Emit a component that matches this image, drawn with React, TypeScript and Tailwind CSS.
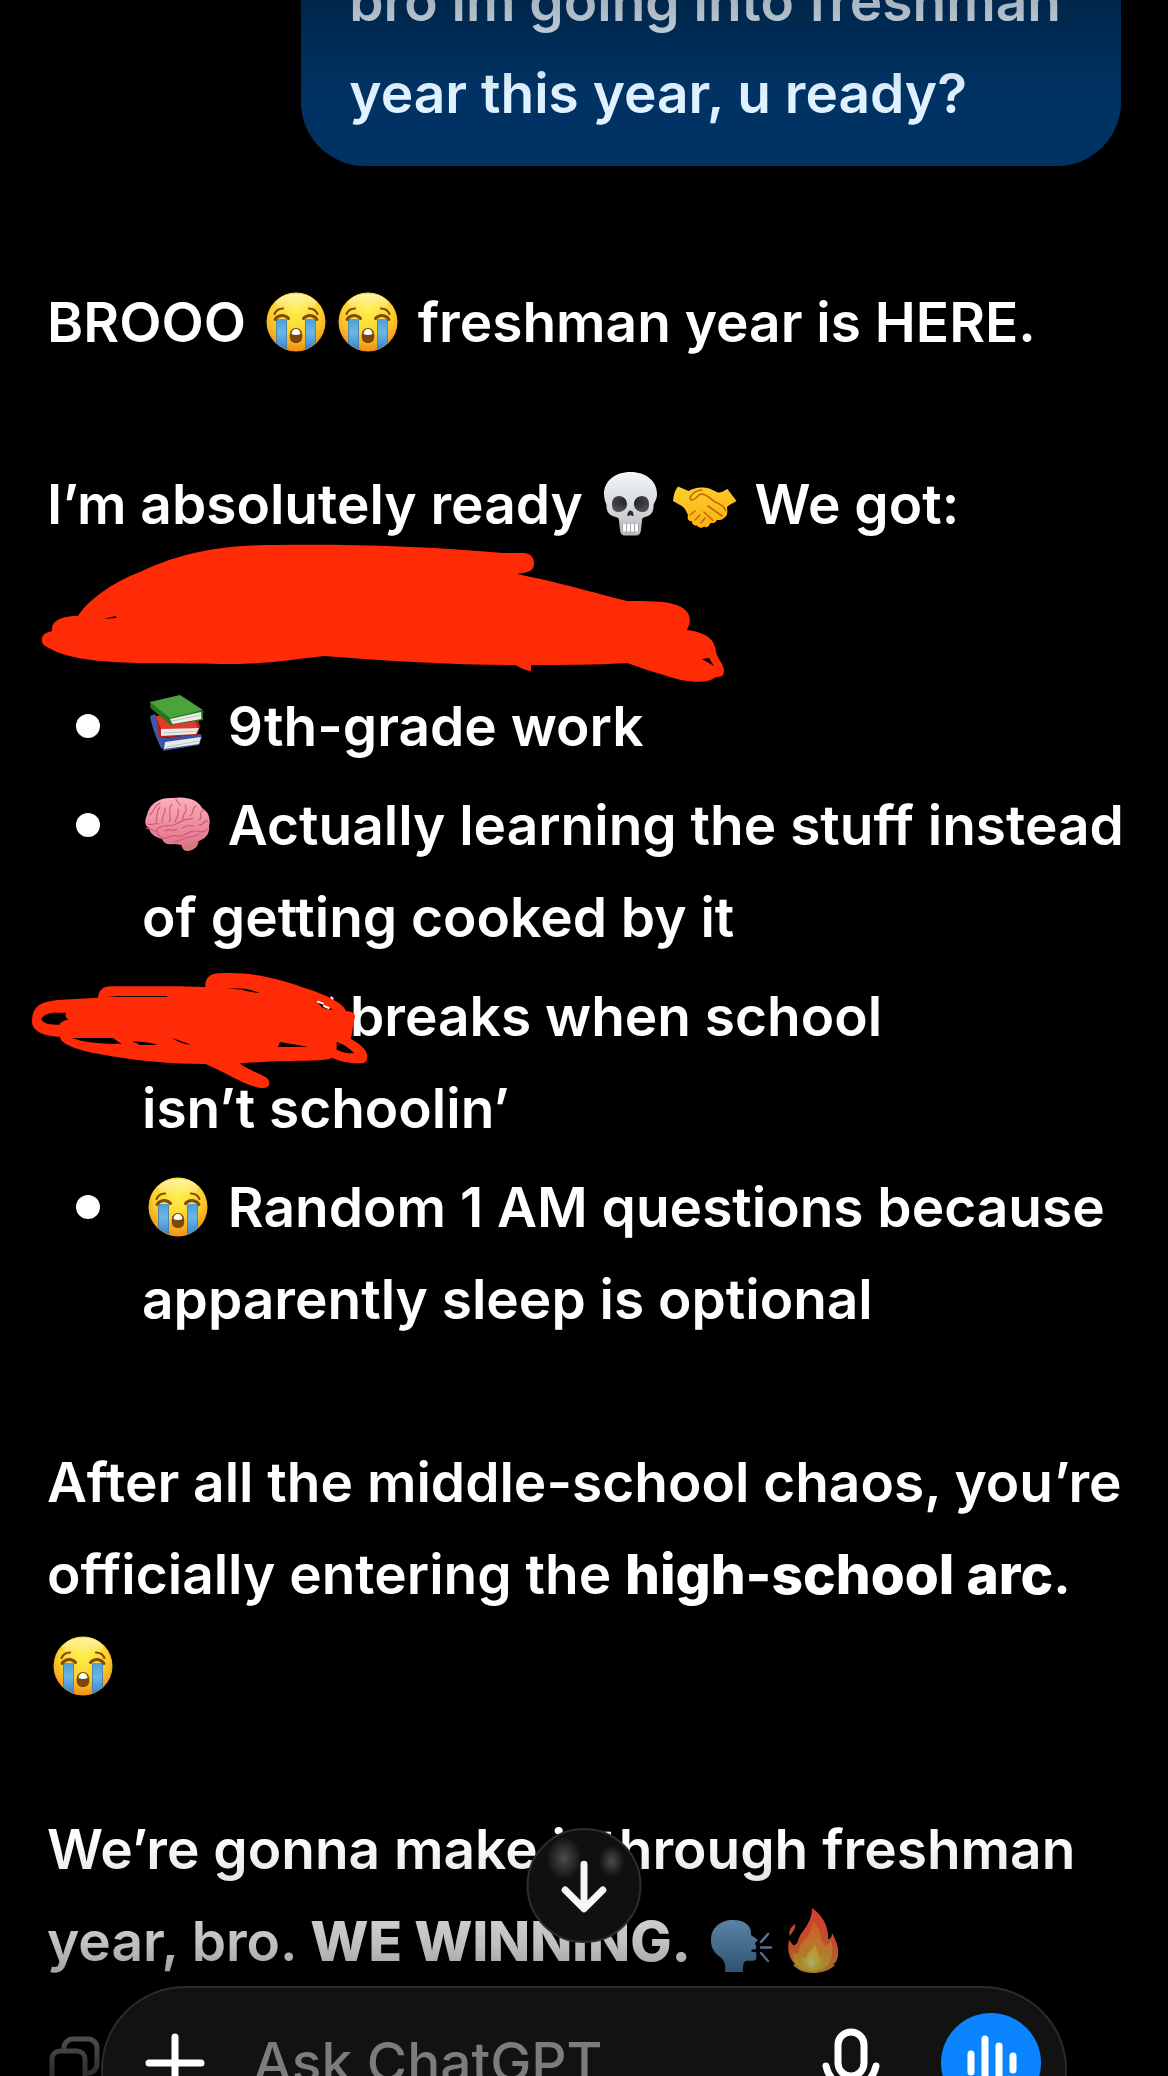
import React from 'react';

interface EmojiProps {
  label: string;
  children: React.ReactNode;
}

const Emoji: React.FC<EmojiProps> = ({ label, children }) => (
  <svg
    role="img"
    aria-label={label}
    viewBox="0 0 72 66"
    className="inline-block w-[72px] h-[66px] align-[-13px]"
    fill="none"
    strokeLinecap="round"
    strokeLinejoin="round"
  >
    {children}
  </svg>
);

const Sob = () => (
  <Emoji label="Loudly crying face">
    <defs>
      <radialGradient id="sob-face" cx="0.5" cy="0.3" r="0.72">
        <stop offset="0" stopColor="#fff04a" />
        <stop offset="0.55" stopColor="#fdd22e" />
        <stop offset="1" stopColor="#ef8a12" />
      </radialGradient>
      <linearGradient id="sob-shine" x1="0" y1="0" x2="0" y2="1">
        <stop offset="0" stopColor="#fff7b8" stopOpacity="0.9" />
        <stop offset="1" stopColor="#fff7b8" stopOpacity="0" />
      </linearGradient>
      <linearGradient id="sob-tear" x1="0" y1="0" x2="0" y2="1">
        <stop offset="0" stopColor="#4e9fd6" />
        <stop offset="0.4" stopColor="#6bb8e8" />
        <stop offset="1" stopColor="#2c78cb" />
      </linearGradient>
      <clipPath id="sob-clip">
        <circle cx="36" cy="33" r="29" />
      </clipPath>
    </defs>
    <circle cx="36" cy="33" r="29.5" fill="url(#sob-face)" />
    <ellipse cx="36" cy="14" rx="20" ry="9" fill="url(#sob-shine)" />
    <g clipPath="url(#sob-clip)">
      <path d="M16.5 30h10v34h-10zM45.5 30h10v34h-10z" fill="url(#sob-tear)" />
      <path d="M16.5 31v32M26.5 31v32M45.5 31v32M55.5 31v32" stroke="#3579b4" strokeWidth="0.8" />
    </g>
    <path d="M15 30.5c3-5 10-5.5 13.5-1M43.5 29.5c3.5-4.5 10.5-4 13.5 1" stroke="#7d4c0c" strokeWidth="3" />
    <path d="M14.5 25c1.5-3.5 4.5-5.5 8.5-5.5M57.5 25c-1.5-3.5-4.5-5.5-8.5-5.5" stroke="#7d4c0c" strokeWidth="2.2" />
    <path d="M36 39c-4 0-6.3 3-6.3 8s2.3 7 6.3 7 6.3-2 6.3-7-2.3-8-6.3-8z" fill="#7b470a" />
    <path d="M31.5 45c.3-3.5 2-5 4.5-5s4.2 1.5 4.5 5c-2.5 1.3-6.5 1.3-9 0z" fill="#fff" />
  </Emoji>
);

const Skull = () => (
  <Emoji label="Skull">
    <defs>
      <linearGradient id="skull-bone" x1="0" y1="0" x2="0" y2="1">
        <stop offset="0" stopColor="#f4f6f8" />
        <stop offset="0.6" stopColor="#d3d6da" />
        <stop offset="1" stopColor="#b4b6ba" />
      </linearGradient>
      <radialGradient id="skull-eye" cx="0.5" cy="0.35" r="0.65">
        <stop offset="0" stopColor="#1b1b1c" />
        <stop offset="1" stopColor="#4f5052" />
      </radialGradient>
    </defs>
    <g transform="translate(1 1)">
      <path
        d="M32.5 0C17 0 6 9 6 22c0 5 1.5 8 2.5 11-.5 5 2 9.5 6 11 4 1.5 6 1 6.5 4l1 10c.3 3.5 2 5.5 5 5.5h11c3 0 4.7-2 5-5.5l1-10c.5-3 2.5-2.5 6-4 4-1.5 6-6 5.5-11 1-3 3.5-6 3.5-11C59 9 48 0 32.5 0z"
        fill="url(#skull-bone)"
      />
      <path d="M21 24c5 0 8 4 8 8s-3 8-8.5 8S14 36 14 32s2-8 7-8zM44 24c-5 0-8 4-8 8s3 8 8.5 8 6.5-4 6.5-8-2-8-7-8z" fill="url(#skull-eye)" />
      <path d="M32.5 38.5c-2 0-3.5 3-3 5.5 1.5.5 2-1 3-1s1.500 1.500 3 1c.5-2.500-1-5.500-3-5.500z" fill="#2b2b2c" />
      <path d="M24.5 52h16v7.5h-16z" fill="#fafafa" />
      <path d="M24.5 52v7M28.5 51v9M32.5 51v9M36.5 51v9M40.5 52v7" stroke="#a5a7aa" strokeWidth="1" />
    </g>
  </Emoji>
);

const Handshake = () => (
  <Emoji label="Handshake">
    <defs>
      <linearGradient id="shake-skin" x1="0" y1="0" x2="0.3" y2="1">
        <stop offset="0" stopColor="#ffd02c" />
        <stop offset="1" stopColor="#fbb316" />
      </linearGradient>
    </defs>
    <path
      d="M9 15.5 19.5 20c4-2 8-3.5 13-3.5 8-1 14 5 18 5 3 0 5-2.5 8-3.5l9 12c-3 2.5-7 3-9.5 6 .5 4 1 9-3 11-2.5 2.5-5 2-7 2-2 4-5 3-6.5 3-1.5 4-4.5 5-6.5 3.5-2.5 2.5-6 1-7-1-4 .5-5-2.5-5-4-4 0-5-3-4-6.5-2-4-3-7.5-8-10L4 30c.5-6 2-11 5-14.5z"
      fill="url(#shake-skin)"
    />
    <path
      d="M22 29c3 1 5-2 8.5-5.5 7-2 10 5 17 8 5 2 8 5 9 8M39 35l14 10M35 41l9 8.500M21 44l5-4M26 49l5-5M32 52l4-5M22 29c-3-4 5-10 11-10"
      stroke="#bd6c05"
      strokeWidth="1.6"
    />
  </Emoji>
);

const Books = () => (
  <Emoji label="Books">
    <path d="m8 23 5-2 8 15 2 20-4-1C15 46 10 35 8 23z" fill="#3f59a8" />
    <path d="m20 45 39-4 1 3-3 8-36 6z" fill="#3a4fa0" />
    <path d="m23 49 36-5-2 7-35 5z" fill="#e8e9ea" />
    <path d="m14 23 41-2 3 13-3 8-38 3z" fill="#b32119" />
    <path d="m14 23 36-2 6 14-37 1z" fill="#e23a2a" />
    <path d="m19 36 38-1-3 6-35 2z" fill="#ecebea" />
    <path d="m8 9 .5 6 20 17 33-5-1-3 1-6z" fill="#27761f" />
    <path d="M8 9 38 2l23 15-33 8z" fill="#4da33b" />
    <path d="m28 26 31-7 .5 7-29 5z" fill="#ebece7" />
    <path d="m30 28 29-6M22 40l33-2M24 54l33-6" stroke="#aeb1ae" strokeWidth="0.7" />
  </Emoji>
);

const Brain = () => (
  <Emoji label="Brain">
    <defs>
      <linearGradient id="brain-fill" x1="0" y1="0" x2="0" y2="1">
        <stop offset="0" stopColor="#fbb0b8" />
        <stop offset="1" stopColor="#e5738d" />
      </linearGradient>
    </defs>
    <path d="M40 48c3-4 14-5 16 0 2 5-4 11-11 11-4 0-7-5-5-11z" fill="#d57a7c" />
    <path
      d="M31 6c12-2 25 1 29 10 7 4 9 12 7 18 1 7-3 12-8 14-5 3-11 2-14 4-4 2-9 0-13 0-5 1-10 0-12-5-7-2-12-5-13-11-5-2-4-9-2-13C7 13 16 5 31 6z"
      fill="url(#brain-fill)"
    />
    <path
      d="M16 36c6-4 11-1 16-3 6-3 11-7 19-6M20 46c5 2 9-4 15-2 7 2 11-6 18-5 5 0 8 3 12-2M8 23c5-5 4-9 10-12M14 30c2-6-1-9 4-15M20 31c-1-7 4-9 3-15M27 30c4-6-3-11 3-18M33 30c1-5 5-7 3-13M41 27c-1-6 6-7 2-14M38 13c-1-3-4-3-4-6M48 24c5-3 1-8 6-10M57 28c5-2-2-8 5-10M57 33c4 1 5-5 9-4M16 36c-3 4 1 8 4 10M23 39c4-3 8 1 12-2M40 36c4-3 8-3 12-2M44 46c4-2 9-1 13-4M6 32c5 2 7-2 11 0M4 36c5 1 7 3 10 3M33 50c3-3 7-1 9-4"
      stroke="#c55a7a"
      strokeWidth="1.1"
    />
  </Emoji>
);

const SpeakingHead = () => (
  <Emoji label="Speaking head">
    <defs>
      <linearGradient id="head-fill" x1="0" y1="0" x2="0" y2="1">
        <stop offset="0" stopColor="#6fa2cb" />
        <stop offset="1" stopColor="#4c80b2" />
      </linearGradient>
    </defs>
    <path
      d="M28 12c-13 0-22 8-22 20 0 9 4 13 9 17 5 4 6 8 5 15h18c0-6 0-10 3-11 4-1 9 1 10-2 1-3 0-5 0-7h-4l-1-2 5-1c1-3-1-4-1-6l3-3-7-5c1-9-6-15-18-15z"
      fill="url(#head-fill)"
    />
    <path d="m56 34 7-8M56 39.5h10M56 45l7 8" stroke="#6c9cc7" strokeWidth="2.4" />
  </Emoji>
);

const Fire = () => (
  <Emoji label="Fire">
    <defs>
      <linearGradient id="fire-out" x1="0" y1="0" x2="0" y2="1">
        <stop offset="0" stopColor="#ff4a3a" />
        <stop offset="0.6" stopColor="#ff6a3c" />
        <stop offset="1" stopColor="#ffb640" />
      </linearGradient>
      <linearGradient id="fire-mid" x1="0" y1="0" x2="0" y2="1">
        <stop offset="0" stopColor="#ff7038" />
        <stop offset="0.6" stopColor="#ffa63a" />
        <stop offset="1" stopColor="#ffe04a" />
      </linearGradient>
      <radialGradient id="fire-in" cx="0.5" cy="0.7" r="0.6">
        <stop offset="0" stopColor="#fffbd0" />
        <stop offset="0.4" stopColor="#ffec55" />
        <stop offset="1" stopColor="#ffc83a" />
      </radialGradient>
    </defs>
    <path
      d="M35 0c10 7 17 18 16 31 3 0 4-3 4-6 4 7 7 14 6 21 0 4-1 7-3 9l-2 1 2 1c-6 6-14 8-22 8s-16-3-20-8l2-1c-6-6-8-14-6-24l4 5c1 1 4-1 5-4 2-10 14-16 14-33zM18 16c1 5-3 8-5 12-2-5 1-9 5-12z"
      fill="url(#fire-out)"
    />
    <path
      d="M36 13c7 7 8 15 9 21 2 1 3 2 3 4 3-1 5-3 6-6 4 14 0 27-13 31-14 3-26-4-25-18 3 2 6 1 6-2 1-11 13-13 14-30z"
      fill="url(#fire-mid)"
    />
    <path d="M37 36c4 5 3 10 6 13 4 8 0 14-7 14-8 0-14-6-10-14 2 1 4 2 4-1 2-5 6-6 7-12z" fill="url(#fire-in)" />
  </Emoji>
);

const TopScribble = () => (
  <svg aria-hidden="true" viewBox="40 540 690 145" className="w-[690px] h-[145px]">
    <path
      fillRule="evenodd"
      fill="#ff2a06"
      d="M42 641c-1-6 2-9 10-11-1-9 7-15 26-15 10-16 35-34 62-44 38-18 78-27 135-27 70-1 150 1 228 8h20c8 0 11 5 11 10 0 7-3 9-17 11 45 9 74 18 110 27 20 0 37 0 46 3 17 4 20 15 14 26 21 3 28 10 29 22 2 8 8 12 8 19 0 5-3 6-8 6-10 8-33 5-52-2-15-4-25-8-37-12-32 2-64 2-96 2v6c-4 0-10-3-16-6-63 0-127-4-191-9-34 4-58 8-92 8-28 0-51-1-78-1-39 0-84-2-105-15-5-2-7-5-7-6zM103 618l13-3v2zM702 658l7-1 5 8z"
    />
  </svg>
);

const SmallScribble = () => (
  <svg
    aria-hidden="true"
    viewBox="30 90 1020 360"
    className="absolute left-[-112px] top-0 w-[340px] h-[120px]"
    fill="none"
    strokeLinecap="round"
    strokeLinejoin="round"
  >
    <path
      fillRule="evenodd"
      fill="#ff2a06"
      d="M120 290c-40 0-84-14-84-45 0-50 30-62 90-66l108-6c2-20 12-34 40-34h200l82 2c-2-24 12-40 40-41 100-6 180 15 270 48 60 20 106 44 112 66 22 0 30 8 26 22-8 20-4 40-12 60 25 14 50 32 50 54 0 16-8 20-24 20-30 0-58-6-80-16-24 10-90 8-160 9l-120 7c22 16 60 32 80 42 14 10 14 32-6 32-50 0-110-46-176-72-100 0-210-8-330-32-60-12-106-30-106-50zM64 238c4-12 20-20 44-20h30c-4 10 0 16 8 20-14 4-24 8-28 16-28 2-50-4-54-16zM262 171l30-3h150v3zM620 144c50 0 76 4 98 15-30-2-44-10-98-15zM155 294h124c10 8 20 14 26 18-60 0-110-4-150-18zM336 303c40 4 60 4 74 12h-50zM455 293l58 21c-24-2-42-10-58-21zM780 306l84 14-90 1zM950 306c24 8 40 20 52 34-22 0-38-4-52-11z"
    />
    <path d="m886 181 54 28-20-2-12-4z" fill="#000" />
    <path d="m893 185 16 6M912 198l14 6M934 172l4 4" stroke="#fff" strokeWidth="6" />
  </svg>
);

interface BulletProps {
  hidden?: boolean;
  children: React.ReactNode;
}

const Bullet: React.FC<BulletProps> = ({ hidden, children }) => (
  <li className="flex">
    <span className="flex w-[95px] h-[92px] shrink-0 items-center pl-[29px]">
      {!hidden && <span className="size-6 rounded-full bg-white" />}
    </span>
    <p className="flex-1 whitespace-nowrap">{children}</p>
  </li>
);

const Composer = () => (
  <form
    onSubmit={(e) => e.preventDefault()}
    className="absolute inset-x-[101px] bottom-[-78px] flex h-[168px] items-start rounded-[84px] border-2 border-[#2b2b2b] bg-[#121212] pl-10 pr-6 pt-[25px]"
  >
    <button type="button" aria-label="Add" className="flex h-[100px] w-16 items-center justify-center">
      <svg viewBox="0 0 60 60" className="size-[60px]" stroke="#fff" strokeWidth="7" strokeLinecap="round">
        <path d="M30 4v52M4 30h52" />
      </svg>
    </button>
    <input
      type="text"
      aria-label="Message"
      placeholder="Ask ChatGPT"
      className="ml-[46px] h-[98px] min-w-0 flex-1 bg-transparent font-medium text-white outline-none placeholder:text-[#7c7c7c]"
    />
    <button type="button" aria-label="Dictate" className="mr-[58px] flex h-[100px] w-16 items-center justify-center">
      <svg viewBox="0 0 64 76" className="w-16 h-[76px]" fill="none" stroke="#fff" strokeWidth="7" strokeLinecap="round">
        <rect x="19" y="7" width="26" height="44" rx="13" />
        <path d="M7 41c3 14 13 20 25 20s22-6 25-20M32 61v11" />
      </svg>
    </button>
    <button type="button" aria-label="Voice mode" className="flex size-[100px] items-center justify-center rounded-full bg-[#0a84ff]">
      <svg viewBox="0 0 52 64" className="w-[52px] h-16" stroke="#fff" strokeWidth="7" strokeLinecap="round">
        <path d="M6 23v18M20 8v48M34 15v34M48 25v14" />
      </svg>
    </button>
  </form>
);

export default function App() {
  return (
    <div className="relative h-screen overflow-hidden bg-black font-['Inter',sans-serif] text-[55px] font-semibold leading-[92px] text-white">
      <main className="-mt-[72px] px-[47px]">
        <div className="ml-auto w-fit whitespace-nowrap rounded-[64px] bg-[#003364] pl-12 pr-[60px] py-[27px] text-[#e0f1ff]">
          bro im going into freshman
          <br />
          year this year, u ready?
        </div>

        <p className="mt-[110px] whitespace-nowrap">
          BROOO <Sob /><Sob /> freshman year is HERE.
        </p>
        <p className="mt-[90px] whitespace-nowrap">
          I’m absolutely ready <Skull /><Handshake /> We got:
        </p>

        <ul className="relative mt-[130px] flex flex-col gap-[7px]">
          <Bullet>
            <Books /> 9th-grade work
          </Bullet>
          <Bullet>
            <Brain /> Actually learning the stuff instead
            <br />
            of getting cooked by it
          </Bullet>
          <Bullet hidden>
            <span className="relative inline-block h-[92px] w-[208px] align-top">
              <SmallScribble />
            </span>
            breaks when school
            <br />
            isn’t schoolin’
          </Bullet>
          <Bullet>
            <Sob /> Random 1 AM questions because
            <br />
            apparently sleep is optional
          </Bullet>
          <li aria-hidden="true" className="absolute left-[-7px] top-[-139px]">
            <TopScribble />
          </li>
        </ul>

        <p className="mt-[91px] whitespace-nowrap">
          After all the middle-school chaos, you’re
          <br />
          officially entering the <strong className="font-extrabold">high-school arc</strong>.
          <br />
          <Sob />
        </p>
        <p className="mt-[91px] whitespace-nowrap">
          We’re gonna make it through freshman
          <br />
          year, bro. <strong className="font-extrabold">WE WINNING.</strong> <SpeakingHead /><Fire />
        </p>

        <button type="button" aria-label="Copy" className="mt-12 block">
          <svg viewBox="0 0 54 54" className="size-[54px]" fill="none" stroke="#d8d8d8" strokeWidth="5">
            <rect x="5" y="16" width="33" height="35" rx="8" />
            <path d="M17 16v-3a9 9 0 0 1 9-9h15a9 9 0 0 1 9 9v16a9 9 0 0 1-9 9h-3" />
          </svg>
        </button>
      </main>

      <div className="pointer-events-none absolute inset-x-0 top-0 h-24 bg-linear-to-b from-black/25 to-transparent" />
      <div className="pointer-events-none absolute inset-x-0 bottom-0 h-[240px] bg-linear-to-b from-transparent via-black/25 via-45% to-black/80" />

      <button
        type="button"
        aria-label="Scroll to bottom"
        className="absolute bottom-[133px] left-1/2 flex size-[115px] -translate-x-1/2 items-center justify-center rounded-full border-2 border-[#2d2d2d] bg-[#101010]"
      >
        <svg viewBox="0 0 112 112" className="size-28" fill="none">
          <defs>
            <radialGradient id="glass-glow">
              <stop offset="0" stopColor="#fff" stopOpacity="0.25" />
              <stop offset="1" stopColor="#fff" stopOpacity="0" />
            </radialGradient>
          </defs>
          <ellipse cx="36" cy="28" rx="18" ry="22" fill="url(#glass-glow)" />
          <ellipse cx="84" cy="31" rx="13" ry="16" fill="url(#glass-glow)" />
          <path d="M56 34v45M37 60l19 19 19-19" stroke="#f6f6f6" strokeWidth="7" strokeLinecap="round" strokeLinejoin="round" />
        </svg>
      </button>

      <Composer />
    </div>
  );
}
